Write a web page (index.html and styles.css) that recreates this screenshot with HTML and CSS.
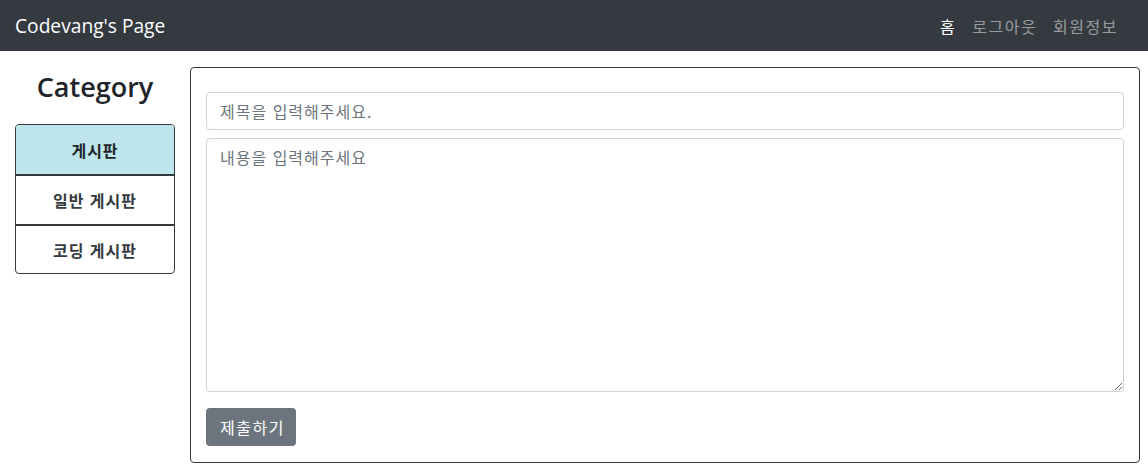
FILE: index.html
```html
<!DOCTYPE html>
<html lang="ko">
<head>
<meta charset="utf-8">
<title>Codevang's Page</title>
<link rel="stylesheet" href="styles.css">
</head>
<body>
<nav class="navbar">
  <a class="brand" href="#">Codevang's Page</a>
  <ul class="nav-links">
    <li><a class="active" href="#">홈</a></li>
    <li><a href="#">로그아웃</a></li>
    <li><a href="#">회원정보</a></li>
  </ul>
</nav>
<div class="layout">
  <aside class="sidebar">
    <h3 class="cat-title">Category</h3>
    <ul class="list-group">
      <li class="list-item info">게시판</li>
      <li class="list-item">일반 게시판</li>
      <li class="list-item">코딩 게시판</li>
    </ul>
  </aside>
  <main class="card">
    <input class="form-control" type="text" placeholder="제목을 입력해주세요.">
    <textarea class="form-control textarea" placeholder="내용을 입력해주세요"></textarea>
    <button class="btn">제출하기</button>
  </main>
</div>
</body>
</html>
```
FILE: styles.css
```css
* { box-sizing: border-box; }
html, body { margin: 0; padding: 0; }
body {
  font-family: "Open Sans", "Noto Sans CJK KR", sans-serif;
  font-size: 16px;
  color: #212529;
  background: #fff;
}
.navbar {
  height: 51px;
  background: #343a40;
  display: flex;
  align-items: center;
  justify-content: space-between;
  padding: 0 22px 0 15px;
}
.brand {
  color: #fff;
  text-decoration: none;
  font-size: 19.2px;
  font-family: "Open Sans", "Noto Sans CJK KR", sans-serif;
}
.nav-links {
  list-style: none;
  margin: 0;
  padding: 0;
  display: flex;
}
.nav-links a {
  display: block;
  padding: 0 8px;
  color: rgba(255,255,255,.5);
  text-decoration: none;
  font-family: "Noto Sans CJK KR", sans-serif;
  font-size: 16px;
  letter-spacing: 1.5px;
}
.nav-links a.active { color: #fff; }
.layout {
  display: flex;
  gap: 15px;
  padding: 16px 8px 0 15px;
}
.sidebar {
  width: 160px;
  flex: none;
}
.cat-title {
  margin: 0;
  text-align: center;
  font-size: 27px;
  font-weight: 600;
  line-height: 40px;
  height: 41px;
  margin-bottom: 16px;
}
.list-group {
  list-style: none;
  margin: 0;
  padding: 0;
  border: 1px solid #343a40;
  border-radius: 4px;
  overflow: hidden;
}
.list-item {
  height: 50px;
  display: flex;
  align-items: center;
  justify-content: center;
  font-weight: 700;
  font-size: 16px;
  letter-spacing: 1px;
  font-family: "Noto Sans CJK KR", sans-serif;
  color: #343a40;
  border-top: 2px solid #343a40;
}
.list-item:first-child { border-top: none; height: 49px; }
.list-item:last-child { height: 49px; }
.list-item.info { background: #bee5eb; color: #212529; }
.card {
  flex: 1;
  border: 1px solid #343a40;
  border-radius: 4px;
  padding: 24px 15px 16px;
  display: flex;
  flex-direction: column;
  align-items: flex-start;
  height: 396px;
}
.form-control {
  width: 100%;
  height: 38px;
  border: 1px solid #ced4da;
  border-radius: 4px;
  padding: 6px 13px;
  font-family: "Noto Sans CJK KR", sans-serif;
  font-size: 16px;
  letter-spacing: 1px;
  color: #495057;
  background: #fff;
}
.form-control::placeholder { color: #6c757d; }
.textarea {
  margin-top: 8px;
  height: 254px;
  resize: vertical;
  line-height: 24px;
}
.btn {
  margin-top: 16px;
  height: 38px;
  padding: 0 11px 0 14px;
  background: #6c757d;
  color: #fff;
  border: none;
  border-radius: 4px;
  font-family: "Noto Sans CJK KR", sans-serif;
  font-size: 16px;
  letter-spacing: 1.5px;
}
```
